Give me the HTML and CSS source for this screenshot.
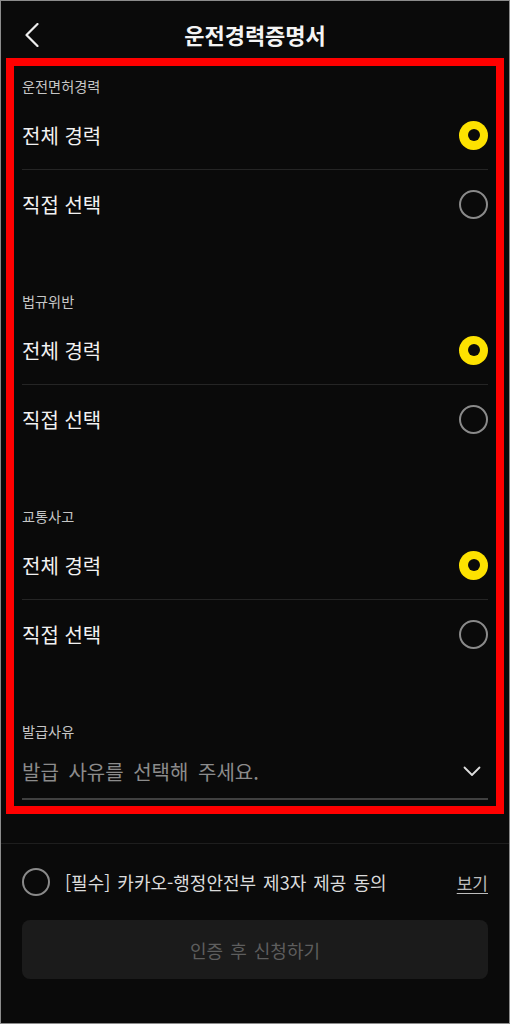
FILE: index.html
```html
<!DOCTYPE html>
<html lang="ko">
<head>
<meta charset="utf-8">
<title>운전경력증명서</title>
<link rel="stylesheet" href="styles.css">
</head>
<body>
<div class="frame">
  <header class="header">
    <div class="header-left">
      <svg class="back" width="14" height="24" viewBox="0 0 14 24"><polyline points="12.5,1 1.5,12 12.5,23" fill="none" stroke="#eeeeee" stroke-width="2.2" stroke-linecap="round" stroke-linejoin="round"/></svg>
    </div>
    <h1 class="title">운전경력증명서</h1>
    <div class="header-right"></div>
  </header>

  <main class="box">
    <section class="group">
      <div class="label">운전면허경력</div>
      <div class="row"><span class="row-text">전체 경력</span><span class="radio on"></span></div>
      <div class="row"><span class="row-text">직접 선택</span><span class="radio"></span></div>
    </section>
    <section class="group">
      <div class="label">법규위반</div>
      <div class="row"><span class="row-text">전체 경력</span><span class="radio on"></span></div>
      <div class="row"><span class="row-text">직접 선택</span><span class="radio"></span></div>
    </section>
    <section class="group">
      <div class="label">교통사고</div>
      <div class="row"><span class="row-text">전체 경력</span><span class="radio on"></span></div>
      <div class="row"><span class="row-text">직접 선택</span><span class="radio"></span></div>
    </section>
    <section class="select-group">
      <div class="label">발급사유</div>
      <div class="select">
        <span class="placeholder">발급 사유를 선택해 주세요.</span>
        <svg class="chev" width="18" height="11" viewBox="0 0 18 11"><polyline points="1.5,1.5 9,9 16.5,1.5" fill="none" stroke="#dddddd" stroke-width="1.8" stroke-linecap="round" stroke-linejoin="round"/></svg>
      </div>
    </section>
  </main>

  <div class="footer">
    <div class="agree">
      <span class="radio agree-radio"></span>
      <span class="agree-text">[필수] 카카오-행정안전부 제3자 제공 동의</span>
      <a class="view">보기</a>
    </div>
    <button class="submit">인증 후 신청하기</button>
  </div>
</div>
</body>
</html>
```
FILE: styles.css
```css
* { box-sizing: border-box; margin: 0; padding: 0; }
html, body { width: 510px; height: 1024px; background: #0a0a0a; }
body {
  font-family: "Noto Sans CJK KR", "Noto Sans", sans-serif;
  color: #f2f2f2;
  overflow: hidden;
}
.frame {
  width: 510px;
  height: 1024px;
  border: 1px solid #8c8c8c;
  background: #0a0a0a;
}
.header {
  height: 57px;
  padding-top: 10px;
  display: grid;
  grid-template-columns: 1fr auto 1fr;
  align-items: center;
}
.header-left { padding-left: 24px; display: flex; align-items: center; height: 47px; }
.back { display: block; }
.title {
  font-size: 22px;
  font-weight: 700;
  color: #f4f4f4;
  line-height: 47px;
}
.box {
  margin: 0 5px;
  border: 8px solid #ff0000;
  padding: 11px 8px 6px;
}
.group { padding-bottom: 54px; }
.label {
  font-size: 14.2px;
  line-height: 18px;
  color: #c6c6c6;
}
.group .label { margin-bottom: 6px; }
.row {
  height: 68px;
  display: flex;
  align-items: center;
  justify-content: space-between;
}
.row + .row { border-top: 1px solid #252525; height: 69px; }
.row-text { font-size: 20px; color: #f2f2f2; }
.radio {
  width: 29px;
  height: 29px;
  border-radius: 50%;
  border: 2px solid #8a8a8a;
  display: flex;
  align-items: center;
  justify-content: center;
  flex: none;
}
.radio.on { border: none; background: #fde200; }
.radio.on::after {
  content: "";
  width: 12px;
  height: 12px;
  border-radius: 50%;
  background: #0a0a0a;
}
.select-group .label { margin-bottom: 4px; }
.select {
  height: 56px;
  display: flex;
  align-items: center;
  justify-content: space-between;
  border-bottom: 2px solid #404040;
  padding-right: 7px;
}
.placeholder { font-size: 20px; word-spacing: 4px; color: #8c8c8c; }
.chev { display: block; }
.footer {
  margin-top: 29px;
  border-top: 1px solid #1e1e1e;
  padding: 24px 21px 0 21px;
}
.agree {
  height: 28px;
  display: flex;
  align-items: center;
}
.agree-radio { width: 28px; height: 28px; }
.agree-text {
  margin-left: 15px;
  font-size: 18px;
  word-spacing: 2px;
  color: #dcdcdc;
  flex: 1;
}
.view {
  font-size: 17px;
  color: #bdbdbd;
  text-decoration: underline;
  text-underline-offset: 3px;
}
.submit {
  margin-top: 24px;
  width: 100%;
  height: 59px;
  border: none;
  border-radius: 8px;
  background: #1b1b1b;
  color: #5e5e5e;
  font-family: "Noto Sans CJK KR", "Noto Sans", sans-serif;
  font-size: 18px;
  word-spacing: 2px;
}
```
